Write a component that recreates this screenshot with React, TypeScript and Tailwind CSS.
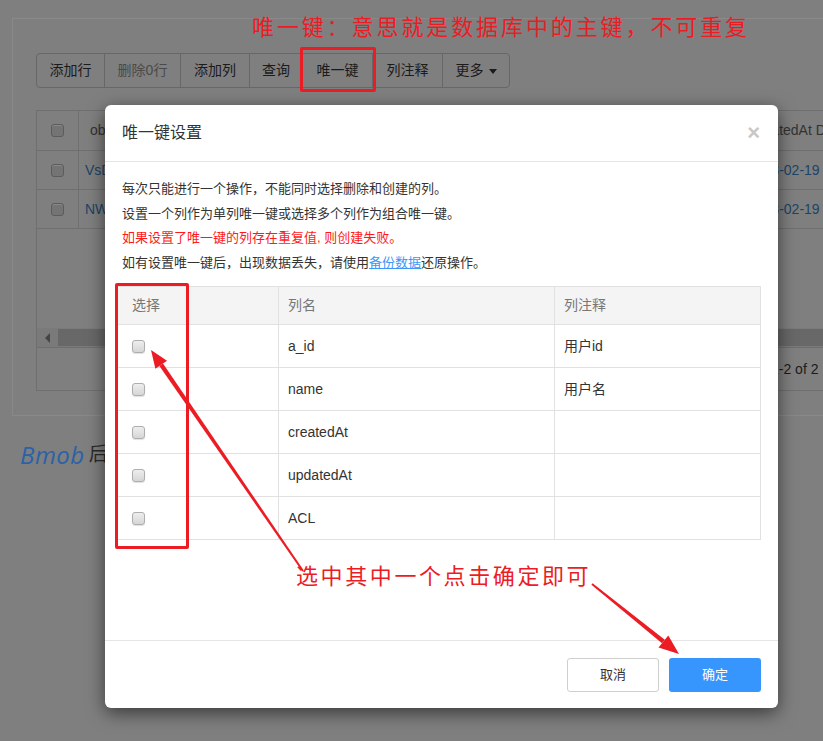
import React from "react";

const UI = "font-['Liberation_Sans','Noto_Sans_CJK_SC',sans-serif]";
const ANN = "font-['Noto_Sans_CJK_SC',serif]";

function DimCheck() {
  return (
    <span className="block h-[13px] w-[13px] rounded-[3px] border border-[#5c5c5c] bg-[#747474] shadow-[inset_0_1px_0_rgba(255,255,255,0.15)]" />
  );
}

function Check() {
  return (
    <span className="block h-[13px] w-[13px] rounded-[3px] border border-[#aeaeae] bg-linear-to-b from-[#eeeeee] to-[#d6d6d6] shadow-[0_1px_1px_rgba(0,0,0,0.12)]" />
  );
}

const toolbar: { label: string; w: string; dim?: boolean; caret?: boolean }[] = [
  { label: "添加行", w: "w-[67px]" },
  { label: "删除0行", w: "w-[76px]", dim: true },
  { label: "添加列", w: "w-[69px]" },
  { label: "查询", w: "w-[53px]" },
  { label: "唯一键", w: "w-[70px]" },
  { label: "列注释", w: "w-[70px]" },
  { label: "更多", w: "w-[67px]", caret: true },
];

const bgRows = [
  { id: "VsDk5556", date: "2018-02-19 10:23:11" },
  { id: "NWb3777H", date: "2018-02-19 10:24:02" },
];

const rows = [
  ["a_id", "用户id"],
  ["name", "用户名"],
  ["createdAt", ""],
  ["updatedAt", ""],
  ["ACL", ""],
];

export default function App() {
  return (
    <div className={`relative h-[741px] w-[823px] overflow-hidden bg-[#7f7f7f] ${UI}`}>
      {/* dimmed background page */}
      <div className="ml-[12px] mt-[18px] h-[398px] w-[900px] border border-[#898989] pl-[23px] pt-[34px]">
        <div className="flex h-[35px] w-fit rounded-[4px] border border-[#676767] text-[14px] text-[#1b1b1b]">
          {toolbar.map((b, i) => (
            <div
              key={b.label}
              className={`flex items-center justify-center gap-[5px] ${b.w} ${i > 0 ? "border-l border-[#676767]" : ""} ${b.dim ? "text-[#4a4a4a]" : ""}`}
            >
              <span>{b.label}</span>
              {b.caret && (
                <span className="mt-[2px] h-0 w-0 border-x-[4px] border-t-[5px] border-x-transparent border-t-[#1b1b1b]" />
              )}
            </div>
          ))}
        </div>

        <div className="mt-[22px] flex h-[281px] flex-col border border-[#6f6f6f] text-[14px] whitespace-nowrap">
          <div className="flex h-[40px] border-b border-[#6f6f6f] text-[#333]">
            <div className="flex w-[42px] shrink-0 items-center justify-center border-r border-[#6f6f6f]">
              <DimCheck />
            </div>
            <div className="flex w-[659px] shrink-0 items-center pl-[11px]">objectId</div>
            <div className="flex shrink-0 items-center pl-[10px]">updatedAt Date</div>
          </div>
          {bgRows.map((r) => (
            <div key={r.id} className="flex h-[39px] border-b border-[#6f6f6f] text-[#1c4466]">
              <div className="flex w-[42px] shrink-0 items-center justify-center border-r border-[#6f6f6f]">
                <DimCheck />
              </div>
              <div className="flex w-[659px] shrink-0 items-center pl-[6px]">{r.id}</div>
              <div className="flex shrink-0 items-center pl-[10px]">{r.date}</div>
            </div>
          ))}
          <div className="flex-1" />
          <div className="flex h-[19px] items-center bg-[#7a7a7a]">
            <span className="ml-[8px] h-0 w-0 border-y-[5px] border-r-[5px] border-y-transparent border-r-[#444]" />
            <span className="ml-[8px] h-[17px] flex-1 bg-[#686868]" />
          </div>
          <div className="flex h-[43px] items-center border-t border-[#6f6f6f] pl-[734px] text-[#1b1b1b]">
            1-2 of 2
          </div>
        </div>
      </div>
      <div className="ml-[20px] mt-[25px] flex items-end gap-[4px]">
        <span className="text-[24px] italic leading-[28px] tracking-[0.5px] text-[#2a62a8] font-['Open_Sans',sans-serif]">
          Bmob
        </span>
        <span className="pb-[2px] text-[19px] leading-[24px] text-[#2a2a2a]">后台管理</span>
      </div>

      {/* modal */}
      <div className="absolute left-[105px] top-[105px] flex h-[603px] w-[673px] flex-col rounded-[6px] bg-white shadow-[0_5px_18px_rgba(0,0,0,0.55)]">
        <div className="flex h-[57px] items-center justify-between border-b border-[#e5e5e5] pl-[17px] pr-[18px]">
          <span className="text-[16px] text-[#333]">唯一键设置</span>
          <span className="text-[22px] font-bold leading-none text-[#c8c8c8]">×</span>
        </div>
        <div className="flex-1 pl-[11px] pr-[17px] pt-[15px]">
          <div className="pl-[6px] text-[13px] leading-[24.5px] text-[#333]">
            <p>每次只能进行一个操作，不能同时选择删除和创建的列。</p>
            <p>设置一个列作为单列唯一键或选择多个列作为组合唯一键。</p>
            <p className="text-[#ff1a1a]">如果设置了唯一键的列存在重复值, 则创建失败。</p>
            <p>
              如有设置唯一键后，出现数据丢失，请使用
              <span className="text-[#3d97f9] underline">备份数据</span>
              还原操作。
            </p>
          </div>
          <table className="mt-[11px] w-[645px] border-collapse text-[14px]">
            <thead>
              <tr className="bg-[#f4f4f4] text-left text-[#777]">
                <th className="h-[38px] w-[162px] border border-[#e1e1e1] pl-[15px] font-normal">选择</th>
                <th className="h-[38px] w-[276px] border border-[#e1e1e1] pl-[9px] font-normal">列名</th>
                <th className="h-[38px] border border-[#e1e1e1] pl-[9px] font-normal">列注释</th>
              </tr>
            </thead>
            <tbody>
              {rows.map(([n, c]) => (
                <tr key={n} className="text-[#333]">
                  <td className="h-[43px] border border-[#e1e1e1] pl-[15px]">
                    <Check />
                  </td>
                  <td className="h-[43px] border border-[#e1e1e1] pl-[9px]">{n}</td>
                  <td className="h-[43px] border border-[#e1e1e1] pl-[9px]">{c}</td>
                </tr>
              ))}
            </tbody>
          </table>
        </div>
        <div className="flex h-[68px] justify-end gap-[10px] border-t border-[#e5e5e5] pr-[17px] pt-[17px] text-[13px]">
          <button className="h-[34px] w-[92px] rounded-[3px] border border-[#cfcfcf] bg-white text-[#333]">取消</button>
          <button className="h-[34px] w-[92px] rounded-[3px] bg-[#3795fe] text-white">确定</button>
        </div>
      </div>

      {/* annotations */}
      <div className="absolute left-[300px] top-[47px] h-[45px] w-[76px] rounded-[2px] border-[3px] border-[#ec1c24]" />
      <div className="absolute left-[115px] top-[283px] h-[266px] w-[74px] rounded-[2px] border-[3px] border-[#ec1c24]" />
      <div className={`absolute left-[252px] top-[12px] text-[22px] leading-[26px] tracking-[2.9px] text-[#ec1c24] ${ANN}`}>
        唯一键：意思就是数据库中的主键，不可重复
      </div>
      <div className={`absolute left-[296px] top-[561px] text-[22px] leading-[26px] tracking-[2.6px] text-[#ec1c24] ${ANN}`}>
        选中其中一个点击确定即可
      </div>
      <svg className="pointer-events-none absolute left-0 top-0" width="823" height="741" viewBox="0 0 823 741">
        <polygon points="303.8,570.4 302.2,571.6 159.4,366.0 163.0,363.6" fill="#ec1c24" />
        <polygon points="151,350 167,360.8 155.4,368.8" fill="#ec1c24" />
        <polygon points="591.4,584.8 592.6,583.2 664.8,639.8 662.0,643.2" fill="#ec1c24" />
        <polygon points="679,654 658.5,647.5 668.3,635.5" fill="#ec1c24" />
      </svg>
    </div>
  );
}
